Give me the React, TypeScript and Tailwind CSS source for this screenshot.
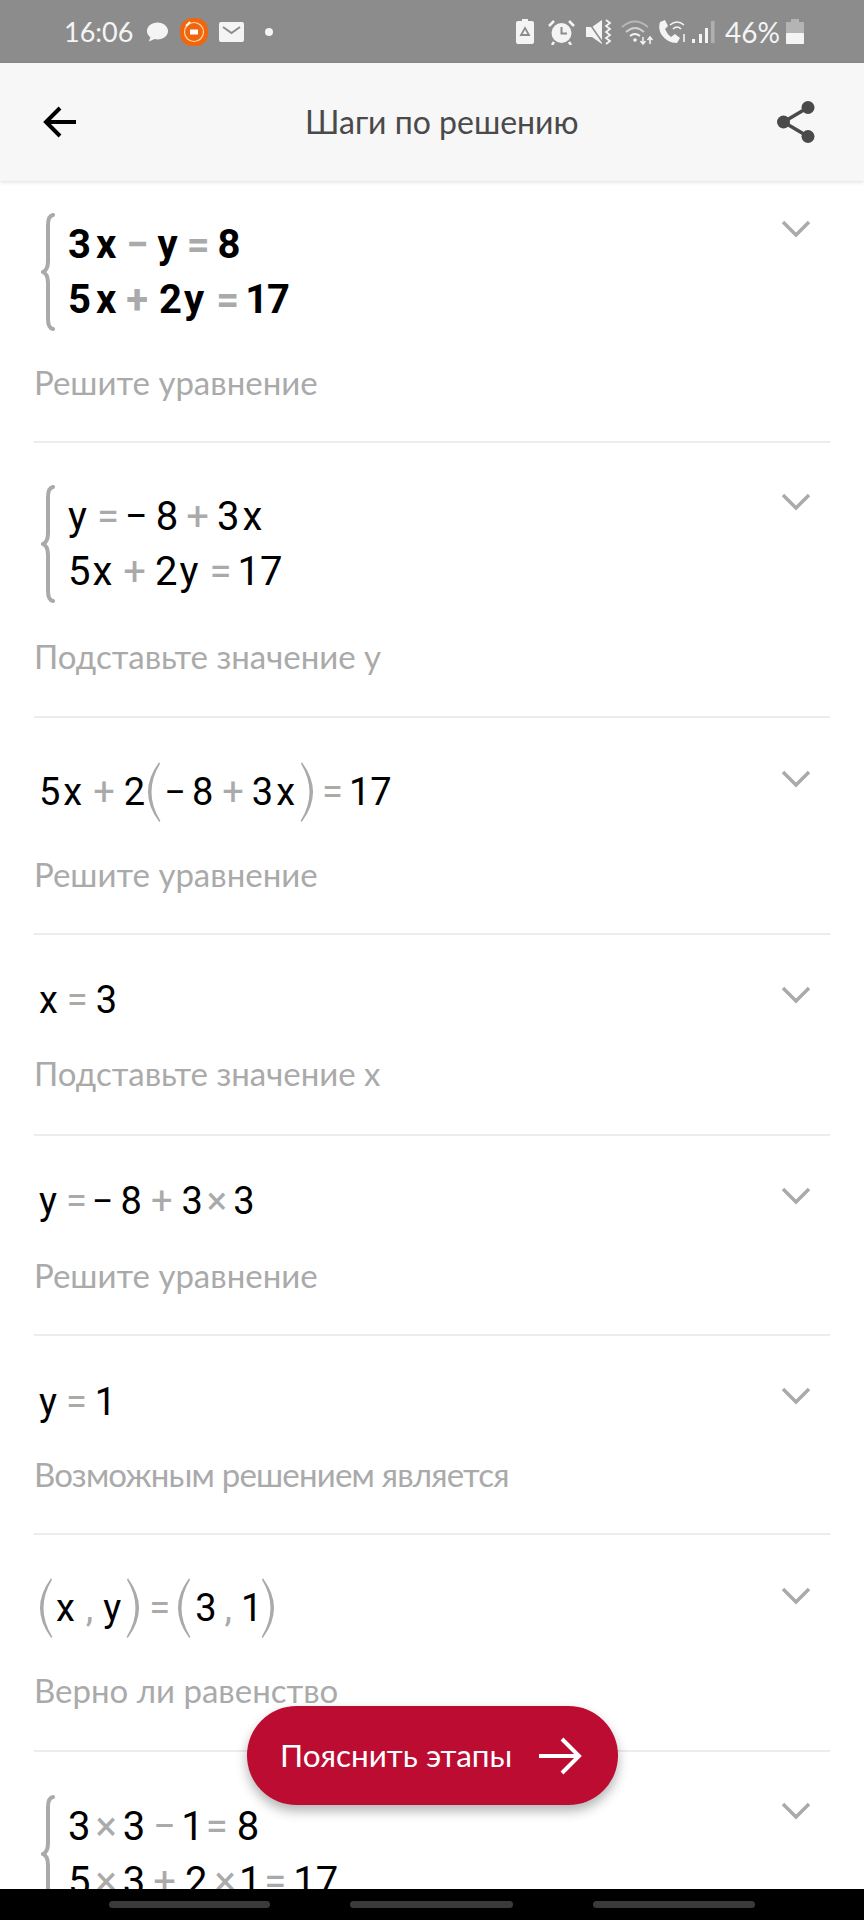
import React from 'react'

const hand = "font-['Lato','Noto_Sans',sans-serif]"

function Op({ children, className = '' }: { children: React.ReactNode; className?: string }) {
  return <span className={`text-[#aaaaaa] ${className}`}>{children}</span>
}

function Paren({ right = false, className = '' }: { right?: boolean; className?: string }) {
  return (
    <svg width="14" height="60" viewBox="0 0 14 60" className={`shrink-0 ${className}`} fill="#aaaaaa" stroke="#aaaaaa" strokeWidth="1.5" strokeLinejoin="round">
      <path d={right ? 'M1.500 1 Q23 30 1.500 59 Q19 30 1.500 1' : 'M12.500 1 Q-9 30 12.500 59 Q-5 30 12.500 1'} />
    </svg>
  )
}

function Brace() {
  return (
    <svg width="14" height="118" viewBox="0 0 14 118" className="shrink-0" fill="none">
      <path d="M12 2 Q7 3 7 12 L7 48 Q7 57 2 59 Q7 61 7 70 L7 106 Q7 115 12 116" stroke="#aaaaaa" strokeWidth="4" strokeLinecap="round" />
    </svg>
  )
}

function Chevron({ className }: { className: string }) {
  return (
    <svg width="30" height="18" viewBox="0 0 30 18" className={`mr-[19px] shrink-0 ${className}`} fill="none">
      <path d="M2 2 L15 15 L28 2" stroke="#aaaaaa" strokeWidth="3.5" />
    </svg>
  )
}

function Desc({ children, className }: { children: React.ReactNode; className: string }) {
  return <div className={`${hand} h-[40px] whitespace-nowrap text-[33px] leading-[40px] text-[#aaaaaa] ${className}`}>{children}</div>
}

function Row({ height, top, chevron, children }: { height: string; top: string; chevron: string; children: React.ReactNode }) {
  return (
    <div className={`mx-[34px] flex items-start justify-between overflow-hidden border-b-2 border-[#ececec] ${height} ${top}`}>
      <div className="min-w-0">{children}</div>
      <Chevron className={chevron} />
    </div>
  )
}

function Line({ children }: { children: React.ReactNode }) {
  return <div className="flex h-[58px] items-center whitespace-nowrap pl-[5px] text-[38px] leading-none text-black">{children}</div>
}

function System({ lines, className }: { lines: React.ReactNode[]; className: string }) {
  return (
    <div className="flex h-[118px] items-center pl-[7px]">
      <Brace />
      <div className={`ml-[13px] flex flex-col gap-[15px] whitespace-nowrap leading-[40px] text-black ${className}`}>
        {lines.map((l, i) => (
          <div key={i} className="flex items-center">{l}</div>
        ))}
      </div>
    </div>
  )
}

function StatusBar() {
  return (
    <div className="flex h-[63px] items-center justify-between bg-[#8c8c8c] pl-[64px] pr-[60px] text-white">
      <div className="flex items-center">
        <span className={`${hand} text-[27px] leading-none text-[#f4f4f4]`}>16:06</span>
        <svg width="23" height="24" viewBox="0 0 24 24" className="ml-[13px]" fill="#f4f4f4">
          <path d="M12 2C5.800 2 1 5.900 1 11c0 2.800 1.500 5 3.600 6.500L3 22l6-2.600c1 .2 2 .3 3 .3 6.200 0 11-3.900 11-8.700S18.200 2 12 2z" />
        </svg>
        <svg width="28" height="28" viewBox="0 0 28 28" className="ml-[11px]">
          <rect x="0" y="0" width="28" height="28" rx="12" fill="#f0660f" />
          <circle cx="14" cy="14" r="9.500" fill="none" stroke="#ffd9a8" strokeWidth="1.200" />
          <rect x="10" y="11.500" width="8" height="5" fill="#fff" />
          <path d="M6 8 L10 4" stroke="#fff" strokeWidth="2" />
        </svg>
        <svg width="25" height="20" viewBox="0 0 25 20" className="ml-[11px]">
          <rect width="25" height="20" rx="2" fill="#f4f4f4" />
          <path d="M4 5 L12.500 11 L21 5" fill="none" stroke="#8c8c8c" strokeWidth="2" />
        </svg>
        <span className="ml-[21px] h-[8px] w-[8px] rounded-full bg-[#f4f4f4]" />
      </div>
      <div className="flex items-center">
        <svg width="18" height="25" viewBox="0 0 18 25">
          <path d="M6 0 H12 V2 H16 Q18 2 18 4 V23 Q18 25 16 25 H2 Q0 25 0 23 V4 Q0 2 2 2 H6 Z" fill="#f4f4f4" />
          <path d="M9 9 L13 16 H5 Z" fill="none" stroke="#8c8c8c" strokeWidth="1.800" />
        </svg>
        <svg width="27" height="26" viewBox="0 0 27 26" className="ml-[14px]">
          <circle cx="13.500" cy="14" r="10" fill="#f4f4f4" />
          <path d="M13.500 8 V14.500 H19" fill="none" stroke="#8c8c8c" strokeWidth="2" />
          <path d="M1 7 L6 2 M26 7 L21 2 M6 23 L4 26 M21 23 L23 26" stroke="#f4f4f4" strokeWidth="2.500" />
        </svg>
        <svg width="26" height="26" viewBox="0 0 26 26" className="ml-[11px]">
          <path d="M0 8 H6 L16 1 V25 L6 18 H0 Z" fill="#f4f4f4" />
          <path d="M1 1 L17 24" stroke="#8c8c8c" strokeWidth="1.500" />
          <path d="M20 1 L24 4 L20 7 L24 10 L20 13 L24 16 L20 19 L24 22 L20 25" fill="none" stroke="#f4f4f4" strokeWidth="1.800" />
        </svg>
        <svg width="33" height="26" viewBox="0 0 33 26" className="ml-[9px]" fill="none">
          <path d="M1 8 Q14 -3 27 8" stroke="#b8b8b8" strokeWidth="1.800" />
          <path d="M5 13 Q14 5 23 13" stroke="#d0d0d0" strokeWidth="1.800" />
          <path d="M9 17 Q14 13 19 17" stroke="#f4f4f4" strokeWidth="1.800" />
          <circle cx="14" cy="21" r="1.800" fill="#f4f4f4" />
          <path d="M22 18 V25 M19.500 22 L22 25 L24.500 22 M29 25 V18 M26.500 21 L29 18 L31.500 21" stroke="#f4f4f4" strokeWidth="1.500" />
        </svg>
        <svg width="30" height="26" viewBox="0 0 30 26" className="ml-[3px]" fill="none">
          <path d="M3 3 L8 1 L11 7 L8 10 Q10 15 14 18 L18 15 L23 19 L20 24 Q10 24 4 15 Q1 9 3 3 Z" fill="#f4f4f4" />
          <path d="M13 6 Q20 0 27 6 M16 10 Q20 6 24 10" stroke="#f4f4f4" strokeWidth="1.600" />
          <path d="M27 15 V23" stroke="#f4f4f4" strokeWidth="1.600" />
        </svg>
        <svg width="24" height="24" viewBox="0 0 24 24" className="ml-[4px]">
          <rect x="1" y="19" width="3" height="4" fill="#f4f4f4" />
          <rect x="8" y="14" width="3" height="9" fill="#f4f4f4" />
          <rect x="14" y="8" width="3" height="15" fill="#f4f4f4" />
          <rect x="20" y="1" width="3.500" height="22" fill="#b0b0b0" />
        </svg>
        <span className={`${hand} ml-[10px] text-[28px] leading-none text-[#f4f4f4]`}>46%</span>
        <svg width="18" height="25" viewBox="0 0 18 25" className="ml-[6px]">
          <path d="M5 0 H13 V3 H18 V25 H0 V3 H5 Z" fill="#b4b4b4" />
          <rect y="14" width="18" height="11" rx="1" fill="#f4f4f4" />
        </svg>
      </div>
    </div>
  )
}

function Header() {
  return (
    <div className="relative z-10 flex h-[118px] items-center bg-[#f7f7f7] pl-[43px] pr-[49px] shadow-[0_1px_4px_rgba(0,0,0,0.14)]">
      <svg width="34" height="32" viewBox="0 0 34 32" fill="none">
        <path d="M33 16 H3 M17 2 L3 16 L17 30" stroke="#000" strokeWidth="4" />
      </svg>
      <span className={`${hand} ml-[228px] text-[32px] leading-none text-[#4a4a4a]`}>Шаги по решению</span>
      <svg width="38" height="42" viewBox="0 0 38 42" fill="#4a4a4a" className="ml-auto">
        <circle cx="6.500" cy="21" r="6.500" />
        <circle cx="31" cy="6.500" r="6.500" />
        <circle cx="31" cy="35.500" r="6.500" />
        <path d="M6.500 21 L31 6.500 M6.500 21 L31 35.500" stroke="#4a4a4a" strokeWidth="3.500" />
      </svg>
    </div>
  )
}

export default function App() {
  return (
    <div className="relative h-[1920px] w-[864px] overflow-hidden bg-white font-['Roboto',sans-serif]">
      <StatusBar />
      <Header />

      <Row height="h-[262px]" top="pt-[32px]" chevron="mt-[7px]">
        <System
          className="text-[40px] font-bold"
          lines={[
            <>3<span className="ml-[5px]">x</span><Op className="ml-[10px] mr-[9px]">−</Op>y<Op className="ml-[9px] mr-[8px]">=</Op>8</>,
            <>5<span className="ml-[5px]">x</span><Op className="ml-[10px] mr-[11px]">+</Op>2<span className="ml-[2px]">y</span><Op className="ml-[12px] mr-[6px]">=</Op><span className="tracking-[-1px]">17</span></>,
          ]}
        />
        <Desc className="mt-[31px]">Решите уравнение</Desc>
      </Row>

      <Row height="h-[275px]" top="pt-[42px]" chevron="mt-[8px]">
        <System
          className="text-[40px]"
          lines={[
            <>y<Op className="ml-[10px] mr-[6px]">=</Op><span className="mr-[8px]">−</span>8<Op className="mx-[8px]">+</Op>3<span className="ml-[3px]">x</span></>,
            <>5<span className="ml-[2px]">x</span><Op className="ml-[11px] mr-[9px]">+</Op>2<span className="ml-[2px]">y</span><Op className="ml-[11px] mr-[6px]">=</Op>17</>,
          ]}
        />
        <Desc className="mt-[33px]">Подставьте значение y</Desc>
      </Row>

      <Row height="h-[217px]" top="pt-[45px]" chevron="mt-[7px]">
        <Line>
          5<span className="ml-[3px]">x</span><Op className="ml-[11px] mr-[9px]">+</Op>2<Paren className="ml-[2px]" /><span className="ml-[3px] mr-[6px]">−</span>8<Op className="ml-[9px] mr-[8px]">+</Op>3<span className="ml-[3px]">x</span><Paren right className="ml-[5px]" /><Op className="ml-[8px] mr-[6px]">=</Op>17
        </Line>
        <Desc className="mt-[33px]">Решите уравнение</Desc>
      </Row>

      <Row height="h-[201px]" top="pt-[36px]" chevron="mt-[15px]">
        <Line>x<Op className="ml-[9px] mr-[8px]">=</Op>3</Line>
        <Desc className="mt-[24px]">Подставьте значение x</Desc>
      </Row>

      <Row height="h-[200px]" top="pt-[36px]" chevron="mt-[15px]">
        <Line>
          y<Op className="ml-[9px] mr-[5px]">=</Op><span className="mr-[7px]">−</span>8<Op className="ml-[9px] mr-[9px]">+</Op>3<Op className="ml-[4px] mr-[6px]">×</Op>3
        </Line>
        <Desc className="mt-[25px]">Решите уравнение</Desc>
      </Row>

      <Row height="h-[199px]" top="pt-[37px]" chevron="mt-[14px]">
        <Line>y<Op className="ml-[9px] mr-[8px]">=</Op>1</Line>
        <Desc className="mt-[23px] tracking-[-0.8px]">Возможным решением является</Desc>
      </Row>

      <Row height="h-[217px]" top="pt-[44px]" chevron="mt-[8px]">
        <Line>
          <Paren /><span className="ml-[3px]">x</span><Op className="ml-[11px] mr-[10px]">,</Op>y<Paren right className="ml-[5px]" /><Op className="ml-[9px] mr-[7px]">=</Op><Paren /><span className="ml-[4px]">3</span><Op className="ml-[8px] mr-[9px]">,</Op>1<Paren right className="-ml-[1px]" />
        </Line>
        <Desc className="mt-[33px]">Верно ли равенство</Desc>
      </Row>

      <div className="mx-[34px] flex items-start justify-between pt-[43px]">
        <System
          className="text-[40px]"
          lines={[
            <>3<Op className="ml-[5px] mr-[6px]">×</Op>3<Op className="ml-[8px] mr-[5px]">−</Op>1<Op className="ml-[2px] mr-[9px]">=</Op>8</>,
            <>5<Op className="ml-[5px] mr-[6px]">×</Op>3<Op className="ml-[8px] mr-[9px]">+</Op>2<Op className="ml-[7px] mr-[3px]">×</Op>1<Op className="ml-[3px] mr-[7px]">=</Op>17</>,
          ]}
        />
        <Chevron className="mt-[7px]" />
      </div>

      <button className="absolute left-[247px] top-[1706px] flex h-[99px] w-[371px] items-center rounded-full bg-[#bc0c32] pl-[33px] shadow-[0_6px_12px_rgba(0,0,0,0.3)]">
        <span className={`${hand} text-[31.500px] leading-none text-white`}>Пояснить этапы</span>
        <svg width="44" height="38" viewBox="0 0 44 38" className="ml-[26px]" fill="none">
          <path d="M1 19 H41 M24 2 L41 19 L24 36" stroke="#fff" strokeWidth="4" />
        </svg>
      </button>

      <div className="absolute bottom-0 left-0 flex h-[31px] w-full items-start justify-center gap-[80px] bg-black pt-[12px]">
        <span className="h-[7px] w-[161px] rounded-full bg-[#3a3a3a]" />
        <span className="h-[7px] w-[163px] rounded-full bg-[#3a3a3a]" />
        <span className="h-[7px] w-[162px] rounded-full bg-[#3a3a3a]" />
      </div>
    </div>
  )
}
